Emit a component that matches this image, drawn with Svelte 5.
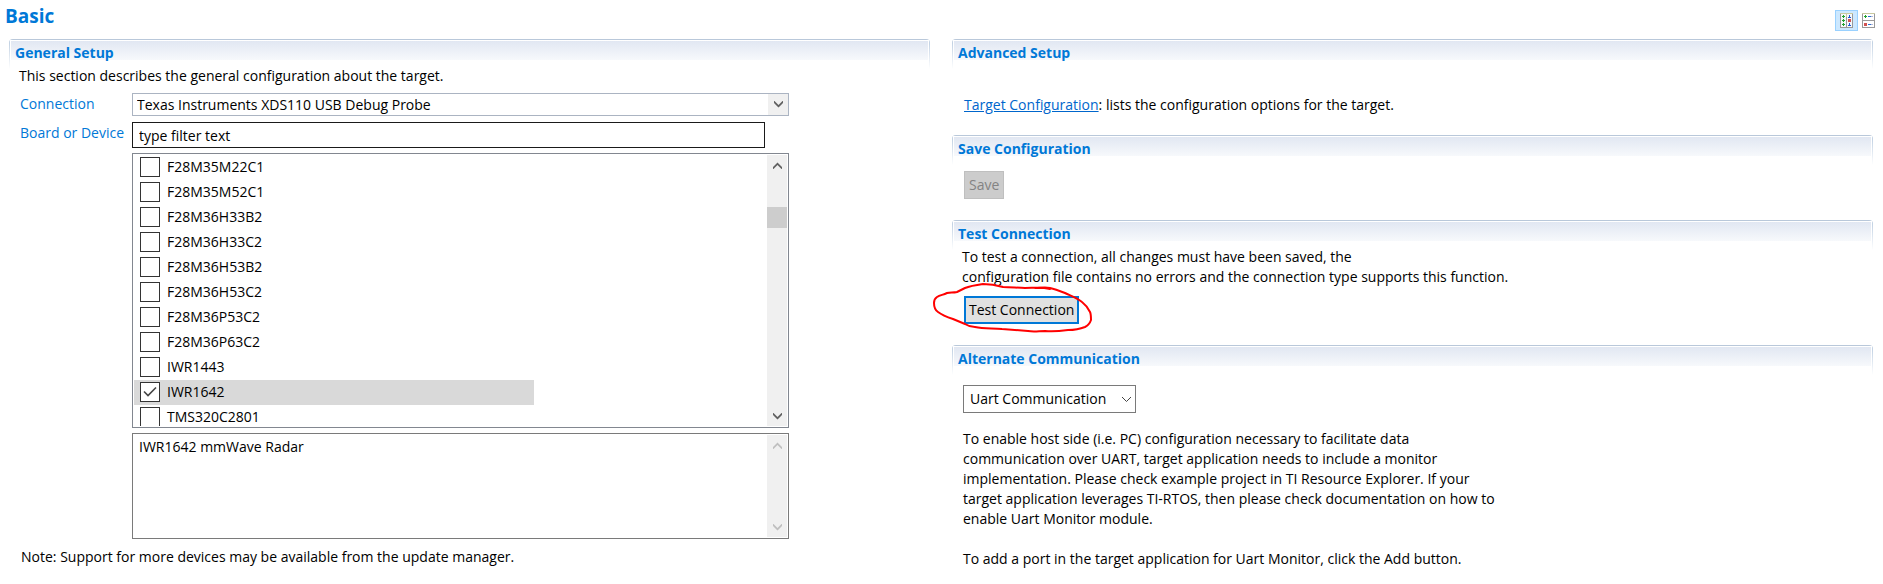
<script lang="ts">
  type Device = { name: string; checked: boolean };

  let connection = $state('xds110');
  let filter = $state('type filter text');
  let selected = $state('IWR1642');
  let alternate = $state('uart');

  let devices: Device[] = $state([
    { name: 'F28M35M22C1', checked: false },
    { name: 'F28M35M52C1', checked: false },
    { name: 'F28M36H33B2', checked: false },
    { name: 'F28M36H33C2', checked: false },
    { name: 'F28M36H53B2', checked: false },
    { name: 'F28M36H53C2', checked: false },
    { name: 'F28M36P53C2', checked: false },
    { name: 'F28M36P63C2', checked: false },
    { name: 'IWR1443', checked: false },
    { name: 'IWR1642', checked: true },
    { name: 'TMS320C2801', checked: false }
  ]);
</script>

{#snippet arrow(dir: string)}
  <svg class="arrow" width="9" height="7" viewBox="0 0 9 7" aria-hidden="true">
    {#if dir === 'up'}
      <path d="M0 5 4.5.5 9 5V7H8.500L4.500 3 .5 7H0Z" fill="currentColor" />
    {:else}
      <path d="M0 2 4.5 6.5 9 2V0H8.500L4.500 4 .5 0H0Z" fill="currentColor" />
    {/if}
  </svg>
{/snippet}

{#snippet plus(x: number, y: number)}
  <path d="M{x + 1} {y}h1v1h1v1h-1v1h-1v-1h-1v-1h1z" fill="#1fa02c" />
{/snippet}

<div class="page">
  <header>
    <h1>Basic</h1>
    <div class="tools">
      <button class="tool active" aria-label="Horizontal layout">
        <svg width="13" height="15" viewBox="0 0 13 15">
          <rect x="0.5" y="0.5" width="12" height="14" fill="#f4f8fa" stroke="#999" />
          <path d="M0 .5h13M6.5 0v15" stroke="#c9c9a0" />
          <path d="M6.5 4v11" stroke="#999" />
          {@render plus(2, 2)}
          {@render plus(2, 6)}
          {@render plus(2, 10)}
          <path d="M9 2h1v2h1v1H8V4h1zM9 10h1v2h1v1H8v-1h1z" fill="#1d55d8" />
          <path d="M8 6h3v3H8z" fill="#d05252" />
        </svg>
      </button>
      <button class="tool" aria-label="Vertical layout">
        <svg width="13" height="15" viewBox="0 0 13 15">
          <rect x="0.5" y="0.5" width="12" height="14" fill="#fff" stroke="#999" />
          <path d="M0 .5h13" stroke="#c9c9a0" />
          <path d="M0 7.5h13" stroke="#999" />
          {@render plus(2, 2)}
          <path d="M2 10h3v3H2z" fill="#d05252" />
          <path d="M6 3.5h3M6 11.5h3" stroke="#2f6fd0" />
          <path d="M9 3.5h2M9 11.5h2" stroke="#b0b8d8" />
        </svg>
      </button>
    </div>
  </header>

  <main>
    <div class="column">
      <section>
        <h2>General Setup</h2>
        <p class="intro">This section describes the general configuration about the target.</p>

        <div class="form">
          <label for="connection">Connection</label>
          <div class="combo flat">
            <select id="connection" bind:value={connection}>
              <option value="xds110">Texas Instruments XDS110 USB Debug Probe</option>
            </select>
            <span class="drop">{@render arrow('down')}</span>
          </div>

          <label for="filter">Board or Device</label>
          <div class="board">
            <input id="filter" class="filter" type="text" bind:value={filter} />

            <div class="box tree">
              <ul>
                {#each devices as device}
                  <li class:selected={device.name === selected}>
                    <label>
                      <span class="check">
                        <input type="checkbox" bind:checked={device.checked} />
                        {#if device.checked}
                          <svg width="14" height="12" viewBox="0 0 14 12" aria-hidden="true">
                            <path d="M1 5.5 5 9.5 13 1.5" fill="none" stroke="#444" stroke-width="1.6" />
                          </svg>
                        {/if}
                      </span>
                      {device.name}
                    </label>
                  </li>
                {/each}
              </ul>
              <div class="scrollbar">
                <button aria-label="Scroll up">{@render arrow('up')}</button>
                <div class="track"><div class="thumb"></div></div>
                <button aria-label="Scroll down">{@render arrow('down')}</button>
              </div>
            </div>

            <div class="box details">
              <textarea readonly aria-label="Device description">IWR1642 mmWave Radar</textarea>
              <div class="scrollbar">
                <button disabled aria-label="Scroll up">{@render arrow('up')}</button>
                <div class="track"></div>
                <button disabled aria-label="Scroll down">{@render arrow('down')}</button>
              </div>
            </div>
          </div>
        </div>

        <p class="note">Note: Support for more devices may be available from the update manager.</p>
      </section>
    </div>

    <div class="column">
      <section>
        <h2>Advanced Setup</h2>
        <p class="link-line"><a href="#target">Target Configuration</a>: lists the configuration options for the target.</p>
      </section>

      <section>
        <h2>Save Configuration</h2>
        <button class="push save" disabled>Save</button>
      </section>

      <section>
        <h2>Test Connection</h2>
        <p class="test-text">
          To test a connection, all changes must have been saved, the<br />
          configuration file contains no errors and the connection type supports this function.
        </p>
        <div class="test">
          <button class="push focused">Test Connection</button>
          <!-- hand-drawn marker round the button -->
          <svg class="marker" width="160" height="50" viewBox="0 0 160 50" aria-hidden="true">
            <path
              d="M118 6C110 4 102 5 93 5C86 5 79 4 71 4C64 2 58 1 51 1C44 2 38 3 33 5L25 9C21 10 18 9 15 10C11 12 8 12 5 14C2 16 2 18 2 20C2 24 3 27 6 29C10 32 15 34 21 36L33 41C36 43 39 44 43 44C52 46 61 45 70 46L96 48C102 49 107 48 113 48C121 49 129 48 136 47C142 47 148 46 153 44C157 42 158 40 159 37C159 34 159 31 158 29C156 25 154 22 150 19C145 15 139 13 133 10C128 8 123 6 118 5C113 4 108 5 103 5"
            />
          </svg>
        </div>
      </section>

      <section>
        <h2>Alternate Communication</h2>
        <div class="combo uart">
          <select bind:value={alternate} aria-label="Alternate communication">
            <option value="uart">Uart Communication</option>
          </select>
          <svg class="chevron" width="11" height="7" viewBox="0 0 11 7" aria-hidden="true">
            <path d="M1 1 5.5 5.5 10 1" fill="none" stroke="#444" />
          </svg>
        </div>
        <p class="help">
          To enable host side (i.e. PC) configuration necessary to facilitate data<br />
          communication over UART, target application needs to include a monitor<br />
          implementation. Please check example project in TI Resource Explorer. If your<br />
          target application leverages TI-RTOS, then please check documentation on how to<br />
          enable Uart Monitor module.
        </p>
        <p class="help">To add a port in the target application for Uart Monitor, click the Add button.</p>
      </section>
    </div>
  </main>
</div>

<style>
  :global(body) {
    margin: 0;
    background: #fff;
  }

  .page {
    padding: 6px 10px 20px 9px;
    color: #000;
    font-family: 'Segoe UI', 'Open Sans', sans-serif;
    font-size: 14px;
    line-height: 20px;
  }

  button,
  input,
  select,
  textarea {
    box-sizing: border-box;
    margin: 0;
    padding: 0;
    border: 0;
    border-radius: 0;
    color: inherit;
    font: inherit;
  }

  header {
    display: flex;
    justify-content: space-between;
    height: 33px;
    margin: 0 -4px;
  }

  h1 {
    margin: 0;
    color: #0078d7;
    font-size: 19px;
    line-height: 20px;
  }

  .tools {
    display: flex;
    gap: 2px;
    padding-top: 4px;
  }

  .tool {
    display: flex;
    align-items: center;
    justify-content: center;
    width: 17px;
    height: 21px;
    background: none;
  }

  .tool.active {
    width: 23px;
    border: 1px solid #99d1ff;
    background: #cce8ff;
  }

  main {
    display: grid;
    grid-template-columns: 1fr 1fr;
    gap: 22px;
  }

  .column {
    display: flex;
    flex-direction: column;
    gap: 20px;
    min-width: 0;
  }

  /* title bar: thin top line, soft fill and side lines that fade out */
  section {
    padding: 4px 10px 0;
    border-radius: 4px 4px 0 0;
    background:
      linear-gradient(#b9c8da, #b9c8da) 0 0 / 100% 1px no-repeat,
      linear-gradient(#b9cbdf, #fff) 0 0 / 1px 30px no-repeat,
      linear-gradient(#b9cbdf, #fff) 100% 0 / 1px 30px no-repeat,
      linear-gradient(#e1e7f2, #f7f9fc) 50% 2px / calc(100% - 4px) 19px no-repeat;
  }

  h2 {
    margin: 0 -4px;
    color: #0078d7;
    font-size: 14px;
    line-height: 20px;
  }

  p {
    margin: 0;
  }

  .intro {
    margin: 3px 0 7px;
  }

  .form {
    display: grid;
    grid-template-columns: 112px 73%;
    row-gap: 6px;
    padding-left: 1px;
  }

  .form > label {
    padding-top: 1px;
    color: #0078d7;
    white-space: nowrap;
  }

  .combo {
    display: grid;
    align-items: center;
  }

  .combo > * {
    grid-area: 1 / 1;
  }

  .combo select {
    width: 100%;
    appearance: none;
    background: #fff;
  }

  .flat select {
    height: 23px;
    padding-left: 4px;
    border: 1px solid #abb4c2;
  }

  .drop {
    display: flex;
    align-items: center;
    justify-content: center;
    justify-self: end;
    width: 20px;
    height: 21px;
    margin-right: 1px;
    background: #f0f0f0;
    color: #606060;
    pointer-events: none;
  }

  .board {
    display: flex;
    flex-direction: column;
    gap: 5px;
  }

  .filter {
    height: 26px;
    margin-right: 24px;
    padding: 0 6px;
    border: 1px solid #1a1a1a;
  }

  .box {
    display: flex;
    box-sizing: border-box;
    padding: 1px;
    border: 1px solid #828790;
  }

  .tree {
    height: 275px;
  }

  .details {
    height: 106px;
    border-color: #7a7a7a;
  }

  ul {
    flex: 1;
    margin: 0;
    padding: 0;
    overflow: hidden;
    list-style: none;
  }

  li {
    max-width: 400px;
    height: 25px;
  }

  li.selected {
    background: #d9d9d9;
  }

  li label {
    display: flex;
    align-items: center;
    gap: 7px;
    height: 24px;
    padding-left: 6px;
  }

  .check {
    display: grid;
    place-items: center;
  }

  .check > * {
    grid-area: 1 / 1;
  }

  .check input {
    width: 20px;
    height: 20px;
    appearance: none;
    border: 1px solid #333;
    background: #fff;
  }

  .check svg {
    pointer-events: none;
  }

  textarea {
    flex: 1;
    padding: 2px 5px;
    background: #fff;
    outline: none;
    resize: none;
    overflow: hidden;
  }

  .scrollbar {
    display: flex;
    flex-direction: column;
    width: 20px;
    background: #f0f0f0;
  }

  .scrollbar button {
    display: flex;
    align-items: center;
    justify-content: center;
    height: 20px;
    background: none;
    color: #606060;
  }

  .scrollbar button:disabled {
    color: #bfbfbf;
  }

  .track {
    flex: 1;
    padding-top: 32px;
  }

  .thumb {
    height: 21px;
    background: #cdcdcd;
  }

  .details .track {
    padding: 0;
  }

  .note {
    margin-top: 8px;
    padding-left: 2px;
  }

  a {
    color: #0066cc;
  }

  .link-line {
    margin-top: 32px;
    padding-left: 2px;
  }

  .push {
    display: block;
    height: 28px;
    padding: 0 4px;
    border: 1px solid #adadad;
    background: #e1e1e1;
  }

  .push:disabled {
    border-color: #bfbfbf;
    background: #ccc;
    color: #838383;
  }

  .push.focused {
    padding: 0 3px;
    border: 2px solid #0078d7;
  }

  .save {
    margin: 12px 0 1px 2px;
  }

  .test-text {
    margin: 3px 0 9px;
  }

  .test {
    position: relative;
    width: fit-content;
    margin: 0 0 1px 2px;
  }

  .marker {
    position: absolute;
    top: -13px;
    left: -32px;
    overflow: visible;
    pointer-events: none;
  }

  .marker path {
    fill: none;
    stroke: #f00;
    stroke-width: 2;
    stroke-linecap: round;
    stroke-linejoin: round;
  }

  .uart {
    width: 173px;
    margin: 16px 0 0 1px;
  }

  .uart select {
    height: 28px;
    padding-left: 6px;
    border: 1px solid #7a7a7a;
  }

  .chevron {
    justify-self: end;
    margin-right: 4px;
    pointer-events: none;
  }

  .help {
    padding-left: 1px;
    margin-top: 16px;
  }

  .help + .help {
    margin-top: 20px;
  }
</style>
